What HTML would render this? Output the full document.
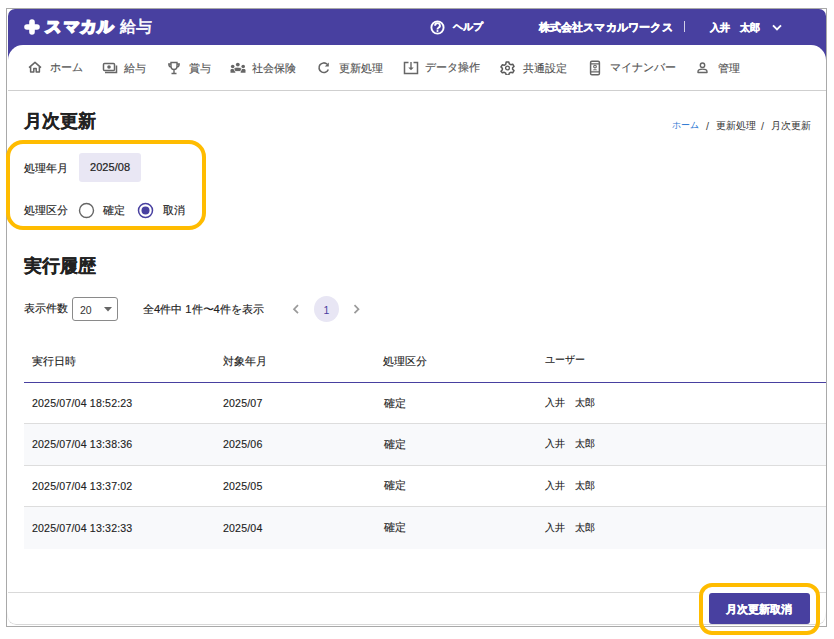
<!DOCTYPE html>
<html lang="ja">
<head>
<meta charset="utf-8">
<style>
*{margin:0;padding:0;box-sizing:border-box}
html,body{width:834px;height:639px;background:#fff;overflow:hidden}
body{font-family:"Liberation Sans",sans-serif;color:#222;position:relative}
.a{position:absolute;white-space:nowrap;line-height:1}
#frame{position:absolute;left:6px;top:8px;width:821px;height:619px;border:1px solid #a9a9a9}
#hdr{position:absolute;left:8px;top:9px;width:818px;height:60px;background:#4840a0;border-radius:7px 7px 0 0}
#nav{position:absolute;left:8px;top:45px;width:818px;height:46px;background:#fff;border-radius:15px 15px 0 0;border-bottom:1px solid #cfcfcf}
.w{color:#fff;font-weight:bold}
.nv{color:#555;font-size:11.1px;-webkit-text-stroke:0.15px #555}
svg.i{position:absolute}
.th{font-size:10.8px;color:#222;-webkit-text-stroke:0.12px #222}
.td{font-size:10.6px;color:#222;-webkit-text-stroke:0.12px #222}
.td.dg{font-size:10.6px;letter-spacing:0.17px;margin-top:-0.6px}
.lb{font-size:10.5px;-webkit-text-stroke:0.15px #222}
.row{position:absolute;left:24px;width:802px;height:41px}
</style>
</head>
<body>
<div id="frame"></div>
<div id="hdr"></div>
<div id="nav"></div>

<!-- logo -->
<svg class="i" style="left:24px;top:19px" width="16" height="16" viewBox="0 0 16 16"><path d="M8 3v10M3 8h10" stroke="#fff" stroke-width="5.6" stroke-linecap="round"/></svg>
<span class="a w" style="left:45px;top:19.3px;font-size:16px;display:inline-block;transform:skewX(-5deg);transform-origin:0 100%;-webkit-text-stroke:1.8px #fff;letter-spacing:1.4px">スマカル</span>
<span class="a" style="left:119.5px;top:19px;font-size:16px;color:#fff;-webkit-text-stroke:0.6px #fff">給与</span>

<!-- help -->
<svg class="i" style="left:430.3px;top:19.6px" width="15" height="15" viewBox="0 0 15 15"><circle cx="7.5" cy="7.5" r="6.1" fill="none" stroke="#fff" stroke-width="1.9"/><path d="M5.1 5.7a2.4 2.4 0 1 1 3.5 2c-.7.4-1.1.8-1.1 1.6v.3" fill="none" stroke="#fff" stroke-width="1.9"/><circle cx="7.5" cy="11" r="1.05" fill="#fff"/></svg>
<span class="a w" style="left:453px;top:22.3px;font-size:10.2px;-webkit-text-stroke:0.3px #fff">ヘルプ</span>
<span class="a w" style="left:538.5px;top:22.3px;font-size:11.4px;letter-spacing:0.2px;-webkit-text-stroke:0.35px #fff">株式会社スマカルワークス</span>
<span class="a" style="left:684px;top:21px;width:1px;height:11px;background:#fff;opacity:.75"></span>
<span class="a w" style="left:709.5px;top:22.6px;font-size:10px;-webkit-text-stroke:0.35px #fff">入井　太郎</span>
<svg class="i" style="left:772px;top:24px" width="10" height="7" viewBox="0 0 10 7"><path d="M1 1.3l4 4 4-4" fill="none" stroke="#fff" stroke-width="1.9"/></svg>

<!-- nav items -->
<svg class="i" style="left:28px;top:61px" width="14" height="13" viewBox="0 0 14 13"><path d="M1 6.6L7 1.4l6 5.2M2.6 5.4v5.6h3.2V7.6h2.4v3.4h3.2V5.4" fill="none" stroke="#666" stroke-width="1.5" stroke-linejoin="round"/></svg>
<span class="a nv" style="left:50px;top:62px">ホーム</span>
<svg class="i" style="left:102px;top:62px" width="16" height="12" viewBox="0 0 16 12"><rect x="1.5" y="1.5" width="11" height="7" rx="1" fill="none" stroke="#666" stroke-width="1.5"/><circle cx="7" cy="5" r="1.8" fill="#666"/><path d="M3 10.5h11.5V3.5" fill="none" stroke="#666" stroke-width="1.5"/></svg>
<span class="a nv" style="left:124px;top:62.7px">給与</span>
<svg class="i" style="left:167px;top:61px" width="14" height="14" viewBox="0 0 14 14"><path d="M4 1.5h6v4a3 3 0 0 1-6 0zM4 3H1.8c0 2 1 3 2.5 3.3M10 3h2.2c0 2-1 3-2.5 3.3M7 8.5v4M4.5 12.5h5" fill="none" stroke="#666" stroke-width="1.4"/></svg>
<span class="a nv" style="left:189px;top:62.7px">賞与</span>
<svg class="i" style="left:230px;top:62px" width="16" height="12" viewBox="0 0 16 12"><circle cx="7.8" cy="2.6" r="1.9" fill="#666"/><circle cx="2.7" cy="4.5" r="1.8" fill="#666"/><circle cx="13.2" cy="4.5" r="1.8" fill="#666"/><path d="M0.5 10.7V8.2c0-.8.7-1.3 1.5-1.3h2.3c.6 0 1.1.4 1.3.9l-.3 2.9z" fill="#666"/><path d="M15.5 10.7V8.2c0-.8-.7-1.3-1.5-1.3h-2.3c-.6 0-1.1.4-1.3.9l.3 2.9z" fill="#666"/><path d="M3.8 6.6c.8-.9 2.3-1.3 4-1.3s3.2.4 4 1.3l-1.3 2.9H5.1z" fill="#666" stroke="#fff" stroke-width="0.8"/></svg>
<span class="a nv" style="left:252px;top:62.7px">社会保険</span>
<svg class="i" style="left:317px;top:61px" width="14" height="14" viewBox="0 0 14 14"><path d="M11.3 8.5A4.8 4.8 0 1 1 10.2 3.3" fill="none" stroke="#666" stroke-width="1.6"/><path d="M11.8 1.5v4h-4z" fill="#666"/></svg>
<span class="a nv" style="left:339px;top:62.7px">更新処理</span>
<svg class="i" style="left:403px;top:61px" width="16" height="14" viewBox="0 0 16 14"><path d="M5.5 1.5H1.5v11h13v-11h-4" fill="none" stroke="#666" stroke-width="1.5"/><path d="M8 1v6" stroke="#666" stroke-width="1.4"/><path d="M5.3 6.5h5.4L8 9.3z" fill="#666"/></svg>
<span class="a nv" style="left:425px;top:62px">データ操作</span>
<svg class="i" style="left:500px;top:61px" width="15" height="14" viewBox="0 0 15 14"><path d="M6.2 1h2.6l.5 1.8 1.5.9 1.9-.5 1.3 2.2-1.4 1.4v1.4l1.4 1.4-1.3 2.2-1.9-.5-1.5.9-.5 1.8H6.2l-.5-1.8-1.5-.9-1.9.5L1 10.2l1.4-1.4V7.4L1 6l1.3-2.2 1.9.5 1.5-.9z" fill="none" stroke="#5a5a5a" stroke-width="1.5" stroke-linejoin="round"/><circle cx="7.5" cy="7" r="1.9" fill="none" stroke="#5a5a5a" stroke-width="1.4"/></svg>
<span class="a nv" style="left:523px;top:62.7px">共通設定</span>
<svg class="i" style="left:589px;top:60px" width="12" height="16" viewBox="0 0 12 16"><rect x="1.6" y="1.2" width="8.8" height="13.6" rx="1.3" fill="none" stroke="#666" stroke-width="1.5"/><path d="M2 3.9h8M2 11.9h8" stroke="#666" stroke-width="1.3"/><circle cx="6" cy="6.6" r="1.35" fill="none" stroke="#666" stroke-width="1.1"/><path d="M3.6 10.3c.9-1.4 3.9-1.4 4.8 0z" fill="#666"/></svg>
<span class="a nv" style="left:610px;top:62px">マイナンバー</span>
<svg class="i" style="left:696px;top:61px" width="13" height="13" viewBox="0 0 13 13"><circle cx="6.5" cy="4.2" r="2.2" fill="none" stroke="#666" stroke-width="1.4"/><path d="M2 11.5v-.8c0-1.8 2-2.6 4.5-2.6s4.5.8 4.5 2.6v.8z" fill="none" stroke="#666" stroke-width="1.4" stroke-linejoin="round"/></svg>
<span class="a nv" style="left:718px;top:62.7px">管理</span>

<!-- title -->
<span class="a" style="left:24px;top:112.6px;font-size:17.5px;font-weight:bold;color:#222;-webkit-text-stroke:0.25px #222">月次更新</span>
<span class="a" style="left:672px;top:121.3px;font-size:9.15px;color:#2f79d3">ホーム</span>
<span class="a" style="left:706px;top:121.3px;font-size:10.8px;color:#444">/</span>
<span class="a" style="left:716px;top:121px;font-size:9.6px;color:#333">更新処理</span>
<span class="a" style="left:761px;top:121.3px;font-size:10.8px;color:#444">/</span>
<span class="a" style="left:771px;top:121px;font-size:9.6px;color:#333">月次更新</span>

<!-- form -->
<span class="a lb" style="left:24px;top:162.9px">処理年月</span>
<div class="a" style="left:79px;top:153px;width:62px;height:29px;background:#e9e7f4;border-radius:3px"></div>
<span class="a" style="left:90px;top:162.3px;font-size:11px;letter-spacing:0.05px;-webkit-text-stroke:0.2px #222">2025/08</span>
<span class="a lb" style="left:24px;top:205.2px">処理区分</span>
<svg class="i" style="left:78px;top:202px" width="17" height="17" viewBox="0 0 17 17"><circle cx="8.5" cy="8.5" r="7" fill="none" stroke="#666" stroke-width="1.4"/></svg>
<span class="a lb" style="left:103.3px;top:205.2px">確定</span>
<svg class="i" style="left:137px;top:202px" width="17" height="17" viewBox="0 0 17 17"><circle cx="8.5" cy="8.5" r="7" fill="none" stroke="#4840a0" stroke-width="1.5"/><circle cx="8.5" cy="8.5" r="4" fill="#4840a0"/></svg>
<span class="a lb" style="left:162.5px;top:205.2px">取消</span>
<div class="a" style="left:6px;top:140px;width:200px;height:90px;border:4px solid #ffbc00;border-radius:17px"></div>

<!-- history -->
<span class="a" style="left:24px;top:258px;font-size:17.5px;font-weight:bold;color:#222;-webkit-text-stroke:0.25px #222">実行履歴</span>
<span class="a lb" style="left:24px;top:303.3px">表示件数</span>
<div class="a" style="left:72px;top:297px;width:46px;height:24px;border:1px solid #8a8a8a;border-radius:3px"></div>
<span class="a" style="left:80px;top:305px;font-size:10.5px;color:#333">20</span>
<svg class="i" style="left:104px;top:307px" width="8" height="5" viewBox="0 0 8 5"><path d="M0 0h8L4 4.5z" fill="#666"/></svg>
<span class="a lb" style="left:143px;top:303.7px;font-size:11.2px">全4件中 1件〜4件を表示</span>
<svg class="i" style="left:292px;top:304px" width="8" height="11" viewBox="0 0 8 11"><path d="M6 1.2L2 5.2 6 9.2" fill="none" stroke="#9a9a9a" stroke-width="1.7"/></svg>
<div class="a" style="left:314px;top:296px;width:25px;height:26px;border-radius:50%;background:#e8e6f4"></div>
<span class="a" style="left:323.5px;top:304.5px;font-size:10.5px;color:#4840a0">1</span>
<svg class="i" style="left:353px;top:304px" width="8" height="11" viewBox="0 0 8 11"><path d="M1.5 1.2L5.5 5.2 1.5 9.2" fill="none" stroke="#9a9a9a" stroke-width="1.7"/></svg>

<!-- table -->
<span class="a th" style="left:32px;top:355.7px">実行日時</span>
<span class="a th" style="left:223px;top:355.7px">対象年月</span>
<span class="a th" style="left:383px;top:355.7px">処理区分</span>
<span class="a th" style="left:544.5px;top:355px;font-size:10.1px">ユーザー</span>
<div class="a" style="left:24px;top:382px;width:802px;height:1px;background:#4840a0"></div>

<div class="row" style="top:383px;height:41px;border-bottom:1px solid #ddd"></div>
<div class="row" style="top:424px;height:42px;background:#f8f9fb;border-bottom:1px solid #ddd"></div>
<div class="row" style="top:466px;height:41px;border-bottom:1px solid #ddd"></div>
<div class="row" style="top:507px;height:42px;background:#f8f9fb"></div>

<span class="a td dg" style="left:32px;top:398.8px">2025/07/04 18:52:23</span>
<span class="a td dg" style="left:223px;top:398.8px">2025/07</span>
<span class="a td" style="left:383.8px;top:397.6px">確定</span>
<span class="a td" style="left:544.8px;top:397.9px;font-size:9.9px">入井　太郎</span>

<span class="a td dg" style="left:32px;top:439.8px">2025/07/04 13:38:36</span>
<span class="a td dg" style="left:223px;top:439.8px">2025/06</span>
<span class="a td" style="left:383.8px;top:438.6px">確定</span>
<span class="a td" style="left:544.8px;top:438.9px;font-size:9.9px">入井　太郎</span>

<span class="a td dg" style="left:32px;top:481.6px">2025/07/04 13:37:02</span>
<span class="a td dg" style="left:223px;top:481.6px">2025/05</span>
<span class="a td" style="left:383.8px;top:480.4px">確定</span>
<span class="a td" style="left:544.8px;top:480.7px;font-size:9.9px">入井　太郎</span>

<span class="a td dg" style="left:32px;top:523.6px">2025/07/04 13:32:33</span>
<span class="a td dg" style="left:223px;top:523.6px">2025/04</span>
<span class="a td" style="left:383.8px;top:522.4px">確定</span>
<span class="a td" style="left:544.8px;top:522.7px;font-size:9.9px">入井　太郎</span>

<!-- footer -->
<div class="a" style="left:8px;top:592px;width:692px;height:1px;background:#d9d9d9"></div><div class="a" style="left:819px;top:592px;width:7px;height:1px;background:#d9d9d9"></div>
<div class="a" style="left:7px;top:605px;width:819px;height:20px;border-left:1px solid #e6e6e6;border-right:1px solid #e6e6e6;border-bottom:1px solid #d8d8d8;border-radius:0 0 9px 9px;-webkit-mask:linear-gradient(#0000 30%,#000 80%)"></div>
<div class="a" style="left:709px;top:593px;width:101px;height:31px;background:#4840a0;border-radius:3px"></div>
<span class="a w" style="left:726px;top:603.7px;font-size:11.35px;-webkit-text-stroke:0.3px #fff">月次更新取消</span>
<div class="a" style="left:699px;top:583px;width:121px;height:52px;border:4px solid #ffbc00;border-radius:13px"></div>
</body>
</html>
